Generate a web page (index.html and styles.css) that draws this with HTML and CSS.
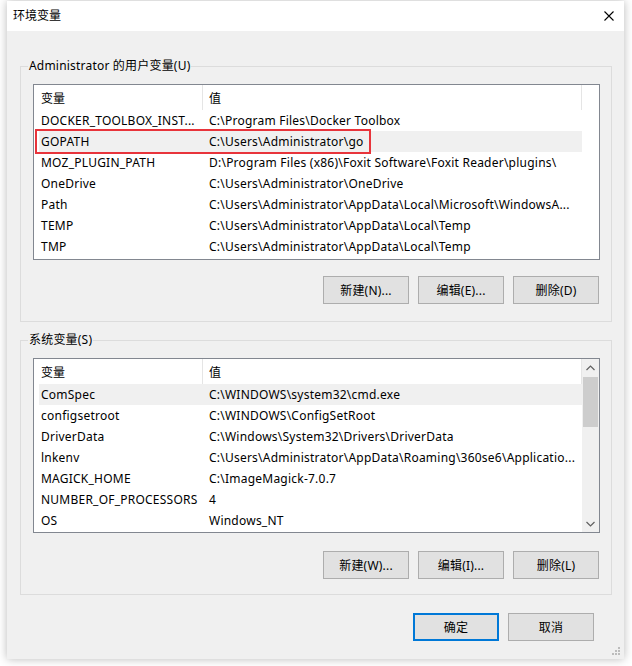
FILE: index.html
```html
<!DOCTYPE html>
<html lang="zh-CN">
<head>
<meta charset="utf-8">
<title>环境变量</title>
<link rel="stylesheet" href="styles.css">
</head>
<body>
<div class="window">
  <div class="titlebar">
    <span class="title">环境变量</span>
    <svg class="close" width="10" height="10" viewBox="0 0 10 10"><path d="M0.5 0.5 L9.5 9.5 M9.5 0.5 L0.5 9.5" stroke="#000" stroke-width="1.1" fill="none"/></svg>
  </div>
  <div class="content">
    <section class="group g1">
      <span class="legend">Administrator 的用户变量(U)</span>
      <div class="list list1">
        <div class="main">
          <div class="header"><div class="h1">变量</div><div class="h2">值</div></div>
          <div class="rows">
            <div class="row"><span class="c1">DOCKER_TOOLBOX_INST...</span><span class="c2">C:\Program Files\Docker Toolbox</span></div>
            <div class="row sel"><span class="c1">GOPATH</span><span class="c2">C:\Users\Administrator\go</span></div>
            <div class="row"><span class="c1">MOZ_PLUGIN_PATH</span><span class="c2">D:\Program Files (x86)\Foxit Software\Foxit Reader\plugins\</span></div>
            <div class="row"><span class="c1">OneDrive</span><span class="c2">C:\Users\Administrator\OneDrive</span></div>
            <div class="row"><span class="c1">Path</span><span class="c2">C:\Users\Administrator\AppData\Local\Microsoft\WindowsA...</span></div>
            <div class="row"><span class="c1">TEMP</span><span class="c2">C:\Users\Administrator\AppData\Local\Temp</span></div>
            <div class="row"><span class="c1">TMP</span><span class="c2">C:\Users\Administrator\AppData\Local\Temp</span></div>
          </div>
        </div>
        <div class="blankbar"><div class="blankhead"></div></div>
        <div class="redbox"></div>
      </div>
      <div class="buttons">
        <button class="btn">新建(N)...</button>
        <button class="btn">编辑(E)...</button>
        <button class="btn">删除(D)</button>
      </div>
    </section>

    <section class="group g2">
      <span class="legend">系统变量(S)</span>
      <div class="list list2">
        <div class="main">
          <div class="header"><div class="h1">变量</div><div class="h2">值</div></div>
          <div class="rows">
            <div class="row sel"><span class="c1">ComSpec</span><span class="c2">C:\WINDOWS\system32\cmd.exe</span></div>
            <div class="row"><span class="c1">configsetroot</span><span class="c2">C:\WINDOWS\ConfigSetRoot</span></div>
            <div class="row"><span class="c1">DriverData</span><span class="c2">C:\Windows\System32\Drivers\DriverData</span></div>
            <div class="row"><span class="c1">lnkenv</span><span class="c2">C:\Users\Administrator\AppData\Roaming\360se6\Applicatio...</span></div>
            <div class="row"><span class="c1">MAGICK_HOME</span><span class="c2">C:\ImageMagick-7.0.7</span></div>
            <div class="row"><span class="c1">NUMBER_OF_PROCESSORS</span><span class="c2">4</span></div>
            <div class="row"><span class="c1">OS</span><span class="c2">Windows_NT</span></div>
          </div>
        </div>
        <div class="scrollbar">
          <div class="arrow"><svg width="9" height="6" viewBox="0 0 9 6"><path d="M0.5 5 L4.5 1 L8.5 5" stroke="#606060" stroke-width="1.2" fill="none"/></svg></div>
          <div class="track"><div class="thumb"></div></div>
          <div class="arrow"><svg width="9" height="6" viewBox="0 0 9 6"><path d="M0.5 1 L4.5 5 L8.5 1" stroke="#606060" stroke-width="1.2" fill="none"/></svg></div>
        </div>
      </div>
      <div class="buttons">
        <button class="btn">新建(W)...</button>
        <button class="btn">编辑(I)...</button>
        <button class="btn">删除(L)</button>
      </div>
    </section>

    <div class="footer">
      <button class="btn default">确定</button>
      <button class="btn">取消</button>
    </div>
  </div>
  <svg class="grip" width="9" height="9" viewBox="0 0 9 9" fill="#bcbcbc">
    <rect x="6" y="0" width="2" height="2"/>
    <rect x="3" y="3" width="2" height="2"/><rect x="6" y="3" width="2" height="2"/>
    <rect x="0" y="6" width="2" height="2"/><rect x="3" y="6" width="2" height="2"/><rect x="6" y="6" width="2" height="2"/>
  </svg>
</div>
</body>
</html>
```

FILE: styles.css
```css
* { box-sizing: border-box; }
html, body { margin: 0; padding: 0; }
body {
  background: #ffffff;
  font-family: "Noto Sans", "Noto Sans CJK SC", sans-serif;
  font-size: 12px;
  color: #000;
  width: 632px;
  height: 666px;
  overflow: hidden;
}
.window {
  position: relative;
  margin: 1px 0 0 7px;
  width: 617px;
  height: 658px;
  background: #f0f0f0;
  box-shadow: 0 0 9px rgba(0, 0, 0, 0.28);
  display: flex;
  flex-direction: column;
}
.titlebar {
  height: 30px;
  background: #ffffff;
  display: flex;
  align-items: center;
  justify-content: space-between;
  padding: 0 10px 1px 6px;
}
.title { font-size: 12px; line-height: 16px; }
.close { display: block; }
.content {
  flex: 1;
  display: flex;
  flex-direction: column;
  padding: 35px 12px 17px 13px;
}
.group {
  position: relative;
  border: 1px solid #dcdcdc;
  padding: 17px 11px 17px 12px;
}
.g2 { margin-top: 18px; padding-bottom: 15px; }
.legend {
  position: absolute;
  top: -9px;
  left: 7px;
  padding: 0 1px;
  background: #f0f0f0;
  line-height: 16px;
  white-space: nowrap;
  letter-spacing: 0.2px;
}
.list {
  position: relative;
  background: #ffffff;
  border: 1px solid #828790;
  display: flex;
}
.list1 { height: 176px; }
.list2 { height: 175px; }
.main { width: 548px; display: flex; flex-direction: column; }
.header { height: 25px; display: flex; }
.h1, .h2 {
  display: flex;
  align-items: center;
  height: 25px;
  border-right: 1px solid #e5e5e5;
}
.h1 { width: 169px; padding-left: 7px; }
.h2 { flex: 1; padding-left: 6px; }
.rows { padding-left: 5px; }
.row {
  height: 21px;
  display: flex;
  align-items: center;
  white-space: nowrap;
  letter-spacing: 0.23px;
}
.row.sel { background: #f0f0f0; }
.c1 { width: 164px; padding-left: 2px; overflow: hidden; }
.c2 { flex: 1; padding-left: 6px; overflow: hidden; }
.blankbar { flex: 1; }
.blankhead { height: 25px; }
.redbox {
  position: absolute;
  left: 1px;
  top: 44px;
  width: 336px;
  height: 25px;
  border: 2px solid #e8343b;
}
.scrollbar {
  width: 17px;
  background: #f0f0f0;
  display: flex;
  flex-direction: column;
}
.arrow {
  height: 17px;
  display: flex;
  align-items: center;
  justify-content: center;
}
.track { flex: 1; padding: 1px 1px 0 1px; }
.thumb { height: 50px; background: #cdcdcd; }
.buttons {
  margin-top: 16px;
  display: flex;
  justify-content: flex-end;
  gap: 9px;
  padding-right: 1px;
}
.g2 .buttons { margin-top: 18px; }
.btn {
  width: 86px;
  height: 28px;
  background: #e1e1e1;
  border: 1px solid #adadad;
  font-family: "Noto Sans", "Noto Sans CJK SC", sans-serif;
  font-size: 12px;
  letter-spacing: 0.2px;
  color: #000;
  padding: 0;
  margin: 0;
}
.btn.default { border: 2px solid #0078d7; }
.footer {
  margin-top: 18px;
  display: flex;
  justify-content: flex-end;
  gap: 9px;
  padding-right: 18px;
}
.grip {
  position: absolute;
  right: 3px;
  bottom: 3px;
}
```
